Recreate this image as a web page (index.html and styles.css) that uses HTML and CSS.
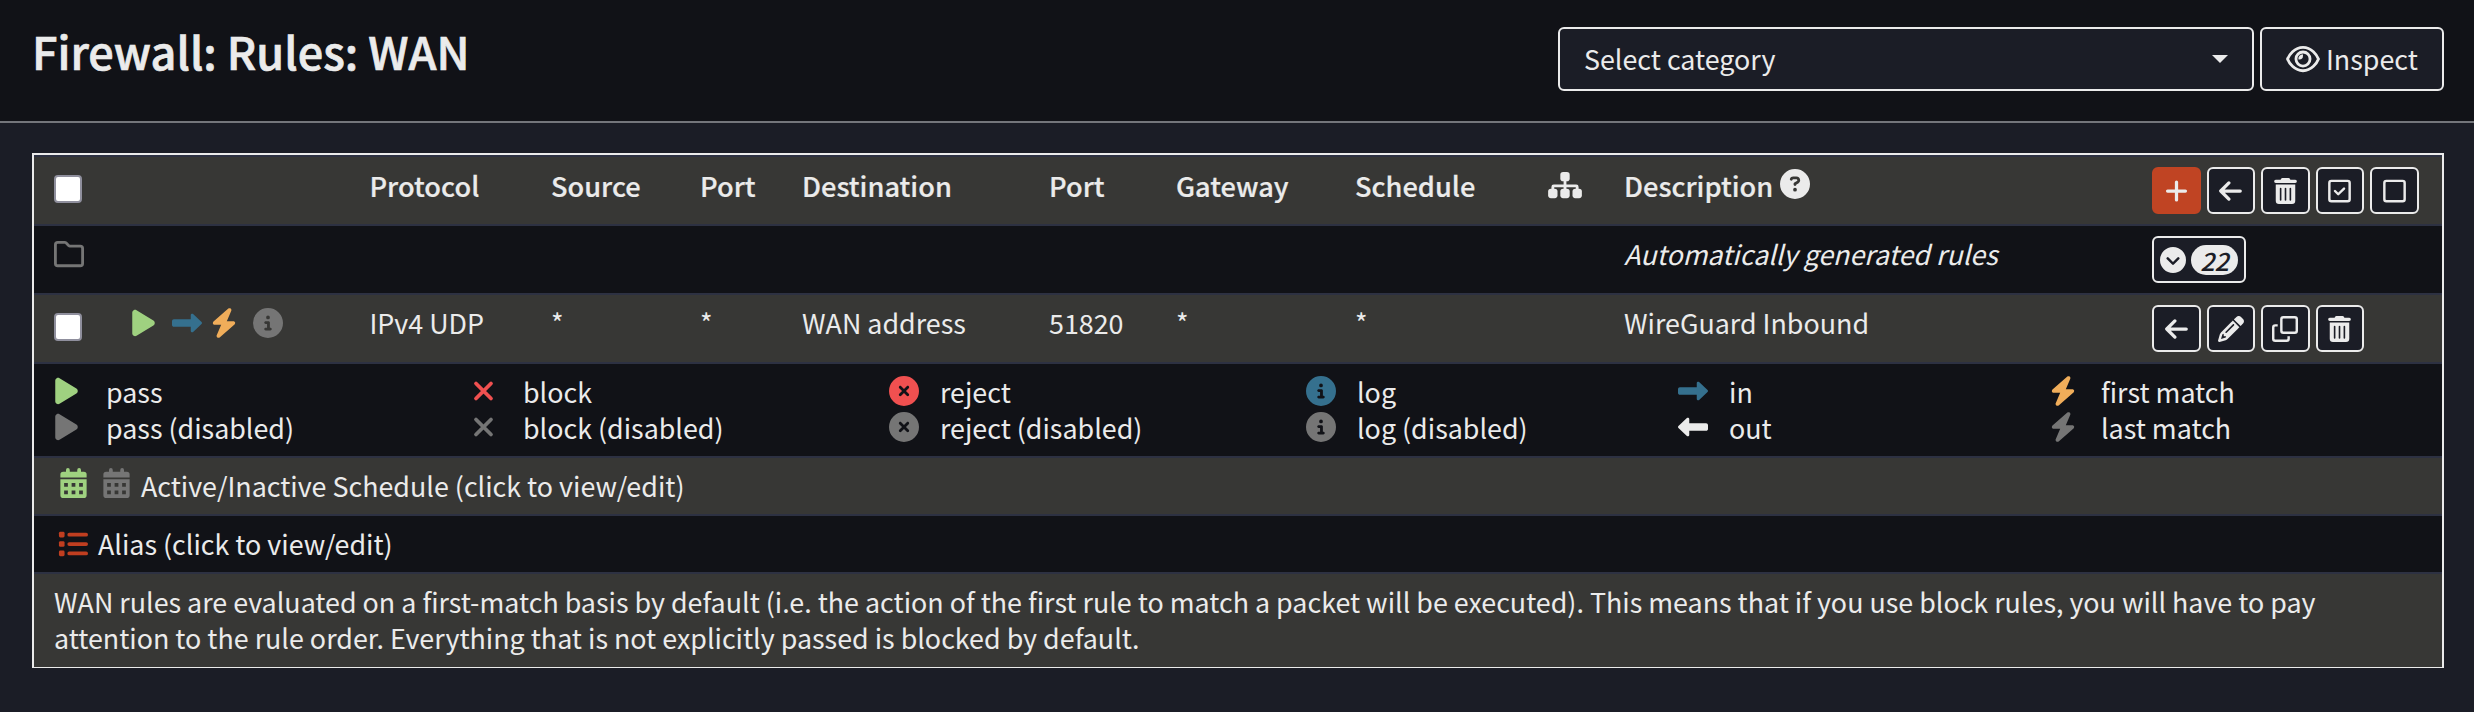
FILE: index.html
```html
<!DOCTYPE html>
<html lang="en">
<head>
<meta charset="utf-8">
<title>Firewall: Rules: WAN</title>
<link rel="stylesheet" href="styles.css">
</head>
<body>
<svg class="defs" aria-hidden="true">
  <symbol id="play" viewBox="0 0 384 512"><path d="M73 39c-14.800-9.100-33.400-9.400-48.500-.9S0 62.600 0 80V432c0 17.400 9.400 33.400 24.500 41.900s33.700 8.100 48.500-.9L361 297c14.300-8.700 23-24.200 23-41s-8.700-32.200-23-41L73 39z"/></symbol>
  <symbol id="bolt" viewBox="0 0 448 512"><path d="M349.400 44.600c5.900-13.700 1.500-29.700-10.600-38.500s-28.600-8-39.900 1.800l-256 224c-10 8.800-13.600 22.900-8.900 35.300S50.700 288 64 288H175.500L98.600 467.400c-5.900 13.700-1.500 29.700 10.600 38.500s28.600 8 39.900-1.800l256-224c10-8.800 13.600-22.900 8.900-35.300s-16.600-20.700-30-20.700H272.500L349.400 44.600z"/></symbol>
  <symbol id="info" viewBox="0 0 512 512"><path d="M256 512A256 256 0 1 0 256 0a256 256 0 1 0 0 512zM216 336h24V272H216c-13.300 0-24-10.700-24-24s10.700-24 24-24h48c13.300 0 24 10.700 24 24v88h8c13.300 0 24 10.700 24 24s-10.700 24-24 24H216c-13.300 0-24-10.700-24-24s10.700-24 24-24zm40-208a32 32 0 1 1 0 64 32 32 0 1 1 0-64z"/></symbol>
  <symbol id="cross-circle" viewBox="0 0 512 512"><path d="M256 512A256 256 0 1 0 256 0a256 256 0 1 0 0 512zM175 175c9.400-9.400 24.600-9.400 33.900 0l47 47 47-47c9.400-9.400 24.600-9.400 33.900 0s9.400 24.600 0 33.900l-47 47 47 47c9.400 9.400 9.400 24.600 0 33.900s-24.600 9.400-33.900 0l-47-47-47 47c-9.400 9.400-24.600 9.400-33.900 0s-9.400-24.600 0-33.900l47-47-47-47c-9.400-9.400-9.400-24.600 0-33.900z"/></symbol>
  <symbol id="cross" viewBox="0 0 384 512"><path d="M64 128L320 384M320 128L64 384" fill="none" stroke="currentColor" stroke-width="64" stroke-linecap="round"/></symbol>
  <symbol id="right" viewBox="0 0 512 512"><path d="M334.500 414c8.800 3.800 19 2 26-4.600l144-136c4.800-4.500 7.500-10.800 7.500-17.400s-2.700-12.900-7.500-17.400l-144-136c-7-6.600-17.200-8.400-26-4.600s-14.500 12.500-14.500 22v72H32c-17.700 0-32 14.300-32 32v64c0 17.700 14.300 32 32 32H320v72c0 9.600 5.700 18.200 14.500 22z"/></symbol>
  <symbol id="arrow" viewBox="0 0 448 512"><path d="M416 256H32M192 96L32 256l160 160" fill="none" stroke="currentColor" stroke-width="64" stroke-linecap="round" stroke-linejoin="round"/></symbol>
  <symbol id="plus" viewBox="0 0 448 512"><path d="M224 80V432M48 256H400" fill="none" stroke="currentColor" stroke-width="64" stroke-linecap="round"/></symbol>
  <symbol id="trash" viewBox="0 0 448 512"><path d="M135.200 17.700C140.600 6.800 151.700 0 163.800 0H284.200c12.100 0 23.200 6.800 28.600 17.700L320 32h96a32 32 0 0 1 0 64H32a32 32 0 0 1 0-64h96zM32 128H416V448a64 64 0 0 1-64 64H96a64 64 0 0 1-64-64zM128 192a16 16 0 0 0-16 16V432a16 16 0 0 0 32 0V208a16 16 0 0 0-16-16zM224 192a16 16 0 0 0-16 16V432a16 16 0 0 0 32 0V208a16 16 0 0 0-16-16zM320 192a16 16 0 0 0-16 16V432a16 16 0 0 0 32 0V208a16 16 0 0 0-16-16z" fill-rule="evenodd"/></symbol>
  <symbol id="square" viewBox="0 0 448 512"><rect x="24" y="56" width="400" height="400" rx="40" fill="none" stroke="currentColor" stroke-width="48"/></symbol>
  <symbol id="square-check" viewBox="0 0 448 512"><rect x="24" y="56" width="400" height="400" rx="40" fill="none" stroke="currentColor" stroke-width="48"/><path d="M135 256l64 64L313 208" fill="none" stroke="currentColor" stroke-width="48" stroke-linecap="round" stroke-linejoin="round"/></symbol>
  <symbol id="pencil" viewBox="0 0 512 512"><path d="M410.300 231l11.300-11.300-33.900-33.900-62.100-62.100L291.700 89.800l-11.300 11.300-22.600 22.600L58.600 322.900c-10.400 10.400-18 23.300-22.200 37.400L1 480.700c-2.500 8.400-.2 17.500 6.100 23.700s15.300 8.500 23.700 6.100l120.300-35.400c14.100-4.200 27-11.800 37.400-22.200L387.700 253.700 410.300 231zM160 399.400l-9.100 22.700c-4 3.100-8.500 5.400-13.300 6.900L59.400 452l23-78.100c1.400-4.900 3.800-9.400 6.900-13.300l22.700-9.100v32c0 8.800 7.200 16 16 16h32zM362.700 18.700L348.300 33.200 325.700 55.800 314.300 67.100l33.900 33.900 62.100 62.100 33.900 33.900 11.300-11.300 22.600-22.600 14.500-14.500c25-25 25-65.500 0-90.500L453.300 18.700c-25-25-65.500-25-90.500 0zm-47.400 168l-144 144c-6.200 6.200-16.400 6.200-22.600 0s-6.200-16.400 0-22.600l144-144c6.200-6.200 16.400-6.200 22.600 0s6.200 16.400 0 22.600z"/></symbol>
  <symbol id="clone" viewBox="0 0 512 512"><path d="M112 184H64a40 40 0 0 0-40 40V448a40 40 0 0 0 40 40H288a40 40 0 0 0 40-40V400" fill="none" stroke="currentColor" stroke-width="48"/><rect x="184" y="24" width="304" height="304" rx="40" fill="none" stroke="currentColor" stroke-width="48"/></symbol>
  <symbol id="folder" viewBox="0 0 512 512"><path d="M64 56H181c9 0 17 3 23 9l45 45c6 6 14 10 23 10H448a40 40 0 0 1 40 40V416a40 40 0 0 1-40 40H64a40 40 0 0 1-40-40V96a40 40 0 0 1 40-40z" fill="none" stroke="currentColor" stroke-width="48"/></symbol>
  <symbol id="eye" viewBox="0 0 576 512"><path d="M288 56C213 56 154 90 110 131C67 171 38 219 24 256C38 293 67 341 110 381C154 422 213 456 288 456S422 422 466 381C509 341 538 293 552 256C538 219 509 171 466 131C422 90 363 56 288 56z" fill="none" stroke="currentColor" stroke-width="48"/><circle cx="288" cy="256" r="120" fill="none" stroke="currentColor" stroke-width="48"/><path d="M284 176a80 80 0 0 0-76 84c9 3 12 4 16 4a64 64 0 0 0 64-64c0-8-1-16-4-24z"/></symbol>
  <symbol id="question" viewBox="0 0 512 512"><path d="M256 512A256 256 0 1 0 256 0a256 256 0 1 0 0 512zM169.800 165.300c7.900-22.300 29.100-37.300 52.800-37.300h58.300c34.900 0 63.100 28.300 63.100 63.100c0 22.600-12.100 43.500-31.700 54.800L280 264.400c-.2 13-10.900 23.600-24 23.600c-13.300 0-24-10.700-24-24V250.500c0-8.600 4.600-16.500 12.100-20.800l44.300-25.400c4.700-2.700 7.600-7.700 7.600-13.100c0-8.400-6.800-15.100-15.100-15.100H222.600c-3.400 0-6.400 2.100-7.500 5.300l-.4 1.200c-4.400 12.500-18.200 19-30.600 14.600s-19-18.200-14.600-30.600zM224 352a32 32 0 1 1 64 0 32 32 0 1 1-64 0z"/></symbol>
  <symbol id="sitemap" viewBox="0 0 576 512"><rect x="208" y="32" width="160" height="160" rx="48"/><rect x="0" y="320" width="160" height="160" rx="48"/><rect x="208" y="320" width="160" height="160" rx="48"/><rect x="416" y="320" width="160" height="160" rx="48"/><path d="M288 170V350M80 350V288c0-10 6-16 16-16H480c10 0 16 6 16 16V350" fill="none" stroke="currentColor" stroke-width="48"/></symbol>
  <symbol id="calendar" viewBox="0 0 448 512"><path fill-rule="evenodd" d="M96 32a32 32 0 0 1 64 0V64H288V32a32 32 0 0 1 64 0V64h48a48 48 0 0 1 48 48V160H0V112A48 48 0 0 1 48 64H96zM0 192H448V464a48 48 0 0 1-48 48H48a48 48 0 0 1-48-48zM64 256V320H128V256zM192 256V320H256V256zM320 256V320H384V256zM64 384V448H128V384zM192 384V448H256V384zM320 384V448H384V384z"/></symbol>
  <symbol id="list" viewBox="0 0 512 512"><rect x="16" y="48" width="96" height="96" rx="24"/><rect x="16" y="208" width="96" height="96" rx="24"/><rect x="16" y="368" width="96" height="96" rx="24"/><path d="M192 96H480M192 256H480M192 416H480" stroke="currentColor" stroke-width="64" stroke-linecap="round"/></symbol>
  <symbol id="chevron" viewBox="0 0 512 512"><path fill-rule="evenodd" d="M256 0a256 256 0 1 0 0 512A256 256 0 1 0 256 0zM135 241L239 345a24 24 0 0 0 34 0L377 241a24 24 0 0 0-34-34L256 294 169 207a24 24 0 0 0-34 34z"/></symbol>
</svg>

<header class="page-head">
  <h1>Firewall: Rules: WAN</h1>
  <div class="tools">
    <div class="control select"><span>Select category</span><i class="caret"></i></div>
    <div class="control inspect"><svg class="w34"><use href="#eye"/></svg><span>Inspect</span></div>
  </div>
</header>

<main class="panel">
  <div class="row cols head">
    <div class="cell"><input type="checkbox" class="check"></div>
    <div></div>
    <div class="cell">Protocol</div>
    <div class="cell">Source</div>
    <div class="cell">Port</div>
    <div class="cell">Destination</div>
    <div class="cell">Port</div>
    <div class="cell">Gateway</div>
    <div class="cell">Schedule</div>
    <div class="cell"><svg class="w34 sitemap"><use href="#sitemap"/></svg></div>
    <div class="cell desc">Description<svg class="w30"><use href="#question"/></svg></div>
    <div class="actions">
      <span class="btn add"><svg class="bi"><use href="#plus"/></svg></span>
      <span class="btn"><svg class="bi"><use href="#arrow"/></svg></span>
      <span class="btn"><svg class="bi"><use href="#trash"/></svg></span>
      <span class="btn"><svg class="bi"><use href="#square-check"/></svg></span>
      <span class="btn"><svg class="bi"><use href="#square"/></svg></span>
    </div>
  </div>
  <div class="row cols dark">
    <div class="cell"><svg class="w30 muted folder"><use href="#folder"/></svg></div>
    <div class="cell auto">Automatically generated rules</div>
    <div class="actions"><span class="btn wide"><svg class="chev"><use href="#chevron"/></svg><span class="badge">22</span></span></div>
  </div>
  <div class="row cols">
    <div class="cell"><input type="checkbox" class="check"></div>
    <div class="cell state">
      <svg class="play green"><use href="#play"/></svg>
      <svg class="w30 blue"><use href="#right"/></svg>
      <svg class="bolt orange"><use href="#bolt"/></svg>
      <svg class="w30 muted"><use href="#info"/></svg>
    </div>
    <div class="cell">IPv4 UDP</div>
    <div class="cell">*</div>
    <div class="cell">*</div>
    <div class="cell">WAN address</div>
    <div class="cell">51820</div>
    <div class="cell">*</div>
    <div class="cell">*</div>
    <div></div>
    <div class="cell">WireGuard Inbound</div>
    <div class="actions">
      <span class="btn"><svg class="bi"><use href="#arrow"/></svg></span>
      <span class="btn"><svg class="w26"><use href="#pencil"/></svg></span>
      <span class="btn"><svg class="w26"><use href="#clone"/></svg></span>
      <span class="btn"><svg class="bi"><use href="#trash"/></svg></span>
    </div>
  </div>
  <div class="row dark legend">
    <svg class="play green"><use href="#play"/></svg><span>pass</span>
    <svg class="play red"><use href="#cross"/></svg><span>block</span>
    <svg class="w30 red"><use href="#cross-circle"/></svg><span>reject</span>
    <svg class="w30 blue"><use href="#info"/></svg><span>log</span>
    <svg class="w30 blue"><use href="#right"/></svg><span>in</span>
    <svg class="bolt orange"><use href="#bolt"/></svg><span>first match</span>
    <svg class="play muted"><use href="#play"/></svg><span>pass (disabled)</span>
    <svg class="play muted"><use href="#cross"/></svg><span>block (disabled)</span>
    <svg class="w30 muted"><use href="#cross-circle"/></svg><span>reject (disabled)</span>
    <svg class="w30 muted"><use href="#info"/></svg><span>log (disabled)</span>
    <svg class="w30 flip"><use href="#right"/></svg><span>out</span>
    <svg class="bolt muted"><use href="#bolt"/></svg><span>last match</span>
  </div>
  <div class="row note schedule">
    <svg class="cal green"><use href="#calendar"/></svg><svg class="cal muted"><use href="#calendar"/></svg><span>Active/Inactive Schedule (click to view/edit)</span>
  </div>
  <div class="row dark note alias">
    <svg class="w30 accent"><use href="#list"/></svg><span>Alias (click to view/edit)</span>
  </div>
  <div class="row hint">WAN rules are evaluated on a first-match basis by default (i.e. the action of the first rule to match a packet will be executed). This means that if you use block rules, you will have to pay<br>attention to the rule order. Everything that is not explicitly passed is blocked by default.</div>
</main>
</body>
</html>
```
FILE: styles.css
```css
* { box-sizing: border-box; }
body {
  margin: 0;
  height: 712px;
  overflow: hidden;
  background: #1b1d26;
  color: #ebebeb;
  font: 400 26.850px/36px "Noto Sans CJK SC", "Noto Sans", sans-serif;
}
svg { display: block; height: 30px; fill: currentColor; flex: none; }
.defs { position: absolute; width: 0; height: 0; }
.w34 { width: 34px; }
.w30 { width: 30px; }
.w26 { width: 26px; height: 26px; }
.play { width: 23px; }
.bolt { width: 26px; }
.cal { width: 27px; }
.green { color: #9fd180; }
.blue { color: #35708e; }
.orange { color: #f0ad5a; }
.red { color: #f05050; }
.muted { color: #757575; }
.accent { color: #c03e20; }
.flip { transform: scaleX(-1); }

.page-head {
  display: flex;
  justify-content: space-between;
  height: 123px;
  padding: 27px 30px 0 32px;
  background: #111217;
  border-bottom: 2px solid #74767b;
}
h1 {
  margin: -3px 0 0;
  font-size: 45px;
  line-height: 54px;
  font-weight: 500;
  white-space: nowrap;
  -webkit-text-stroke: 0.7px currentColor;
}
.tools { display: flex; gap: 6px; }
.control {
  display: flex;
  align-items: center;
  height: 64px;
  border: 2px solid #ebebeb;
  border-radius: 6px;
  background: #1b1d26;
}
.select { width: 696px; justify-content: space-between; padding: 0 24px; }
.inspect { width: 184px; gap: 6px; padding-left: 24px; }
.caret { border: 8px solid transparent; border-top-color: #ebebeb; border-bottom: 0; }

.panel {
  margin: 30px 30px 0 32px;
  height: 515px;
  border: 2px solid #ebebeb;
}
.row { border-top: 2px solid #2d3142; background: #373735; }
.dark { background: #111217; }
.cols {
  display: grid;
  grid-template-columns: 78px 237.500px 181.500px 149px 102px 247px 127px 179px 192px 77px 528px 300px;
  height: 69px;
  padding-left: 20px;
}
.cell { padding-top: 10px; white-space: nowrap; }
.head .cell { font-size: 27.200px; font-weight: 500; -webkit-text-stroke: 0.2px currentColor; }
.sitemap { margin: 3px 0 0 1px; }
.desc { display: flex; gap: 7px; }
.desc svg { margin-top: 2px; }
.auto { grid-column: 11; font-style: italic; }
.auto + .actions { grid-column: 12; }
.check {
  appearance: none;
  display: block;
  width: 28px;
  height: 28px;
  margin: 8px 0 0;
  background: #fff;
  border: 2px solid #8f8f9d;
  border-radius: 4px;
}
.folder { margin-top: 3px; }
.state { display: flex; align-items: flex-start; }
.state svg { margin-top: 3px; }
.state svg:nth-child(2) { margin-left: 17px; }
.state svg:nth-child(3) { margin-left: 9px; }
.state svg:nth-child(4) { margin-left: 16px; }

.actions { display: flex; gap: 6px; padding-top: 10px; }
.btn {
  display: flex;
  align-items: center;
  justify-content: center;
  width: 48.500px;
  height: 47px;
  border: 2px solid #ebebeb;
  border-radius: 6px;
  background: #1b1d26;
}
.bi { width: 23px; height: 26px; }
.add { background: #c04423; border-color: #c04423; }
.wide { width: 94px; gap: 5px; }
.chev { width: 26px; height: 26px; }
.badge {
  width: 47px;
  height: 30px;
  border-radius: 15px;
  background: #ebebeb;
  color: #1b1d26;
  font: italic 500 25px/30px "Noto Sans CJK SC", sans-serif;
  text-align: center;
}

.legend {
  display: grid;
  grid-template-columns: 52px 365px 52px 365px 52px 365px 52px 320px 52px 320px 52px 1fr;
  grid-auto-rows: 36px;
  height: 94px;
  padding: 10px 0 0 20px;
}
.legend svg { margin: 2px 0 0 .5px; }
.note { display: flex; padding: 10px 0 0 24px; }
.schedule { height: 58px; padding-left: 26px; }
.schedule svg { margin-right: 16px; }
.schedule svg + svg { margin-right: 11px; }
.alias { height: 58px; }
.alias svg { margin: 3px 10px 0 0; }
.hint { height: 95px; padding: 10px 0 0 20px; white-space: nowrap; }
```
